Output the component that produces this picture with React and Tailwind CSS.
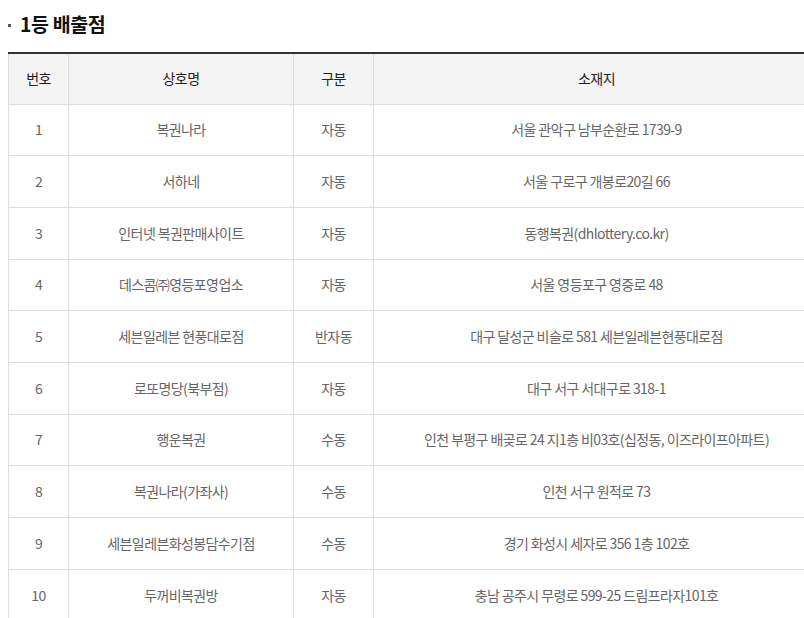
import React from "react";

const rows = [
  ["1", "복권나라", "자동", "서울 관악구 남부순환로 1739-9"],
  ["2", "서하네", "자동", "서울 구로구 개봉로20길 66"],
  ["3", "인터넷 복권판매사이트", "자동", "동행복권(dhlottery.co.kr)"],
  ["4", "데스콤㈜영등포영업소", "자동", "서울 영등포구 영중로 48"],
  ["5", "세븐일레븐 현풍대로점", "반자동", "대구 달성군 비슬로 581 세븐일레븐현풍대로점"],
  ["6", "로또명당(북부점)", "자동", "대구 서구 서대구로 318-1"],
  ["7", "행운복권", "수동", "인천 부평구 배곶로 24 지1층 비03호(십정동, 이즈라이프아파트)"],
  ["8", "복권나라(가좌사)", "수동", "인천 서구 원적로 73"],
  ["9", "세븐일레븐화성봉담수기점", "수동", "경기 화성시 세자로 356 1층 102호"],
  ["10", "두꺼비복권방", "자동", "충남 공주시 무령로 599-25 드림프라자101호"],
];

const App = () => {
  return (
    <div
      className="w-[804px] h-[618px] overflow-hidden bg-white"
      style={{ fontFamily: '"Noto Sans CJK KR", "Noto Sans", sans-serif' }}
    >
      {/* Title */}
      <div className="flex items-center h-[52px] pb-[4px] pl-[8px]">
        <span className="w-[3px] h-[3px] bg-[#555] mr-[9px] mt-[2px]"></span>
        <h3 className="text-[19.5px] font-bold text-[#111] tracking-[-0.4px]">
          1등 배출점
        </h3>
      </div>

      <div className="pl-[8px]">
        <table className="w-[812px] border-collapse table-fixed border-t-2 border-t-[#333] text-[14px] tracking-[-0.6px]">
          <colgroup>
            <col className="w-[60px]" />
            <col className="w-[225px]" />
            <col className="w-[80px]" />
            <col />
          </colgroup>
          <thead>
            <tr className="bg-[#f4f4f4] h-[51px]">
              {["번호", "상호명", "구분", "소재지"].map((h) => (
                <th
                  key={h}
                  className="border border-[#ddd] border-t-0 font-normal text-[#222] text-center"
                >
                  {h}
                </th>
              ))}
            </tr>
          </thead>
          <tbody>
            {rows.map((r) => (
              <tr key={r[0]} className="h-[51.7px]">
                {r.map((c, i) => (
                  <td
                    key={i}
                    className="border border-[#ddd] text-center text-[#666] px-2"
                  >
                    {c}
                  </td>
                ))}
              </tr>
            ))}
          </tbody>
        </table>
      </div>
    </div>
  );
};

export default App;
